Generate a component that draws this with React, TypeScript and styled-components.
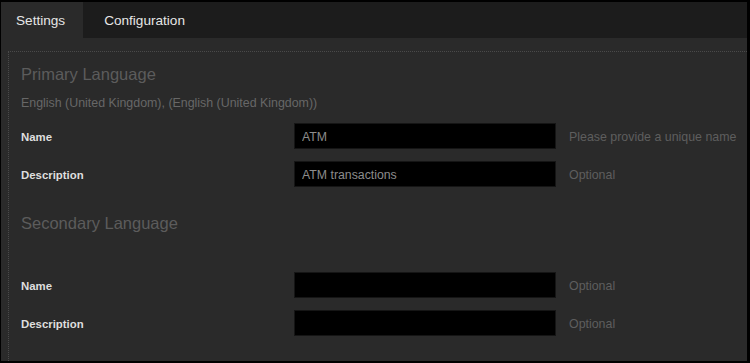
import React from 'react'
import styled, { createGlobalStyle } from 'styled-components'

const GlobalStyle = createGlobalStyle`
  html, body {
    margin: 0;
    padding: 0;
    background: #000000;
  }
  * {
    box-sizing: border-box;
  }
`

const Frame = styled.div`
  width: 750px;
  height: 363px;
  background: #2a2a2a;
  border-style: solid;
  border-color: #000000;
  border-width: 2px 3px 2px 1px;
  display: flex;
  flex-direction: column;
  font-family: "Liberation Sans", Arial, sans-serif;
  overflow: hidden;
`

const TabBar = styled.div`
  display: flex;
  height: 36px;
  background: #1c1c1c;
  gap: 6px;
`

const Tab = styled.div<{ active?: boolean }>`
  display: flex;
  align-items: center;
  padding: 1px 18px 0 15px;
  font-size: 13.6px;
  color: #e6e6e6;
  background: ${({ active }) => (active ? '#2a2a2a' : 'transparent')};
`

const Body = styled.div`
  flex: 1;
  padding: 13px 0 0 7px;
  display: flex;
  flex-direction: column;
`

const Fieldset = styled.div`
  flex: 1;
  border-top: 1px dotted #4a4a4a;
  border-left: 1px dotted #4a4a4a;
  padding: 11px 0 0 12px;
  display: flex;
  flex-direction: column;
  gap: 25px;
`

const Section = styled.div`
  display: flex;
  flex-direction: column;
  gap: 12px;
`

const Heading = styled.div`
  font-size: 16.5px;
  line-height: 20px;
  padding-top: 1px;
  height: 20px;
  color: #5c5c5c;
`

const Locale = styled.div`
  font-size: 12.4px;
  line-height: 16px;
  height: 16px;
  color: #676767;
`

const Row = styled.div`
  display: grid;
  grid-template-columns: 273px 262px auto;
  align-items: center;
  height: 26px;
`

const Label = styled.div`
  font-size: 11.4px;
  font-weight: bold;
  color: #dedede;
  padding-top: 2px;
`

const Input = styled.input`
  height: 26px;
  width: 262px;
  background: #000000;
  border: 1px solid #151515;
  outline: none;
  padding: 1px 7px 0;
  font-family: "Liberation Sans", Arial, sans-serif;
  font-size: 12.3px;
  color: #8c8c8c;
`

const Hint = styled.div`
  padding: 2px 0 0 13px;
  font-size: 12.4px;
  color: #5e5e5e;
  white-space: nowrap;
`

type Field = { label: string; value: string; hint: string }

const primary: Field[] = [
  { label: 'Name', value: 'ATM', hint: 'Please provide a unique name' },
  { label: 'Description', value: 'ATM transactions', hint: 'Optional' },
]

const secondary: Field[] = [
  { label: 'Name', value: '', hint: 'Optional' },
  { label: 'Description', value: '', hint: 'Optional' },
]

const LanguageSection = ({ title, locale, fields }: { title: string; locale: string; fields: Field[] }) => (
  <Section>
    <Heading>{title}</Heading>
    <Locale>{locale}</Locale>
    {fields.map((f, i) => (
      <Row key={i}>
        <Label>{f.label}</Label>
        <Input defaultValue={f.value} readOnly />
        <Hint>{f.hint}</Hint>
      </Row>
    ))}
  </Section>
)

const App: React.FunctionComponent = () => {
  return (
    <>
      <GlobalStyle />
      <Frame>
        <TabBar>
          <Tab active>Settings</Tab>
          <Tab>Configuration</Tab>
        </TabBar>
        <Body>
          <Fieldset>
            <LanguageSection
              title="Primary Language"
              locale="English (United Kingdom), (English (United Kingdom))"
              fields={primary}
            />
            <LanguageSection title="Secondary Language" locale="" fields={secondary} />
          </Fieldset>
        </Body>
      </Frame>
    </>
  )
}

export default App
